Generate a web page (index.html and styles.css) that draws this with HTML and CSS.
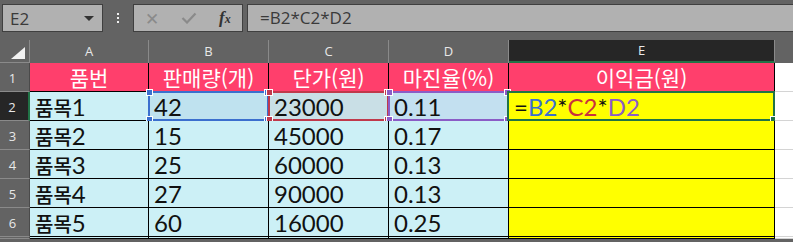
FILE: index.html
```html
<!DOCTYPE html>
<html lang="ko">
<head>
<meta charset="UTF-8" />
  <meta name="viewport" content="width=device-width, initial-scale=1.0"/>
  <title>E2 | 이익금</title>
  <link rel="stylesheet" href="styles.css">
</head>
<body>
  <div class="formula-bar">
    <div class="name-box">
      <span>E2</span>
      <span class="caret"></span>
    </div>
    <div class="grip"><i></i><i></i><i></i></div>
    <div class="fx-buttons">
      <span class="btn-x">&#x2715;</span>
      <svg class="btn-ok" width="16" height="12" viewBox="0 0 16 12"><path d="M1.5 6 L6 10.5 L14.5 1.5" fill="none" stroke="#8a8a8a" stroke-width="2.2"/></svg>
      <span class="btn-fx">f<small>x</small></span>
    </div>
    <div class="formula-input">=B2*C2*D2</div>
  </div>

  <div class="sheet">
    <!-- column headers -->
    <div class="corner"><span class="tri"></span></div>
    <div class="col-head">A</div>
    <div class="col-head">B</div>
    <div class="col-head">C</div>
    <div class="col-head">D</div>
    <div class="col-head active">E</div>
    <div class="col-head blank"></div>

    <!-- row 1 -->
    <div class="row-head">1</div>
    <div class="cell head ko">품번</div>
    <div class="cell head ko">판매량(개)</div>
    <div class="cell head ko">단가(원)</div>
    <div class="cell head ko">마진율(%)</div>
    <div class="cell head ko">이익금(원)</div>
    <div class="cell empty"></div>

    <!-- row 2 -->
    <div class="row-head active">2</div>
    <div class="cell data"><span class="ko">품목</span>1</div>
    <div class="cell data ref-b">42<span class="sel blue"><i class="h tl"></i><i class="h tr"></i><i class="h bl"></i><i class="h br"></i></span></div>
    <div class="cell data ref-c">23000<span class="sel red"><i class="h tl"></i><i class="h tr"></i><i class="h bl"></i><i class="h br"></i></span></div>
    <div class="cell data ref-d">0.11<span class="sel purple"><i class="h tl"></i><i class="h tr"></i><i class="h bl"></i><i class="h br"></i></span></div>
    <div class="cell result">=<span class="c-blue">B2</span>*<span class="c-red">C2</span>*<span class="c-purple">D2</span><span class="sel green"><i class="h br"></i></span></div>
    <div class="cell empty"></div>

    <!-- rows 3-6 -->
    <div class="row-head">3</div>
    <div class="cell data"><span class="ko">품목</span>2</div>
    <div class="cell data">15</div>
    <div class="cell data">45000</div>
    <div class="cell data">0.17</div>
    <div class="cell result"></div>
    <div class="cell empty"></div>

    <div class="row-head">4</div>
    <div class="cell data"><span class="ko">품목</span>3</div>
    <div class="cell data">25</div>
    <div class="cell data">60000</div>
    <div class="cell data">0.13</div>
    <div class="cell result"></div>
    <div class="cell empty"></div>

    <div class="row-head">5</div>
    <div class="cell data"><span class="ko">품목</span>4</div>
    <div class="cell data">27</div>
    <div class="cell data">90000</div>
    <div class="cell data">0.13</div>
    <div class="cell result"></div>
    <div class="cell empty"></div>

    <div class="row-head">6</div>
    <div class="cell data"><span class="ko">품목</span>5</div>
    <div class="cell data">60</div>
    <div class="cell data">16000</div>
    <div class="cell data">0.25</div>
    <div class="cell result"></div>
    <div class="cell empty"></div>

    <!-- row 7, only its top shows -->
    <div class="row-head"></div>
    <div class="cell data"></div>
    <div class="cell data"></div>
    <div class="cell data"></div>
    <div class="cell data"></div>
    <div class="cell result"></div>
    <div class="cell empty"></div>
  </div>
</body>
</html>
```

FILE: styles.css
```css
* {
  box-sizing: border-box;
}
body {
  margin: 0;
  background: #636363;
  font-family: 'Segoe UI', 'Open Sans', 'Noto Sans CJK KR', sans-serif;
  overflow: hidden;
}

/* formula bar */
.formula-bar {
  display: flex;
  align-items: center;
  height: 36px;
  padding: 0 0 0 2px;
}
.name-box {
  display: flex;
  align-items: center;
  justify-content: space-between;
  width: 101px;
  height: 28px;
  padding: 0 8px 0 7px;
  background: #b1b1b1;
  border: 1px solid #3f3f3f;
  color: #3a3a3a;
  font-family: 'Open Sans', sans-serif;
  font-size: 17px;
}
.caret {
  width: 0;
  height: 0;
  border-left: 5px solid transparent;
  border-right: 5px solid transparent;
  border-top: 5px solid #333;
}
.grip {
  display: flex;
  flex-direction: column;
  gap: 2px;
  width: 30px;
  align-items: center;
}
.grip i {
  width: 2px;
  height: 2px;
  background: #f0f0f0;
}
.fx-buttons {
  display: flex;
  align-items: center;
  width: 110px;
  height: 28px;
  padding: 0 0 0 11px;
  background: #b1b1b1;
  border: 1px solid #3f3f3f;
}
.btn-x {
  width: 36px;
  color: #8a8a8a;
  font-size: 17px;
}
.btn-ok {
  margin-right: 22px;
}
.btn-fx {
  font-family: 'Liberation Serif', serif;
  font-style: italic;
  font-weight: bold;
  font-size: 17px;
  color: #333;
}
.btn-fx small {
  font-size: 12px;
}
.formula-input {
  flex: 1;
  height: 28px;
  margin-left: 4px;
  padding: 0 0 0 12px;
  background: #b1b1b1;
  border: 1px solid #3f3f3f;
  border-right: none;
  color: #3a3a3a;
  font-family: 'Open Sans', sans-serif;
  font-size: 17px;
  line-height: 26px;
}

/* sheet grid */
.sheet {
  display: grid;
  grid-template-columns: 30px 119px 120px 120px 120px 266px 30px;
  grid-template-rows: 23px repeat(6, 29px);
  margin-top: 4px;
}
.corner {
  position: relative;
  border-right: 1px solid #8a8a8a;
  border-bottom: 1px solid #8a8a8a;
}
.tri {
  position: absolute;
  right: 4px;
  bottom: 3px;
  width: 0;
  height: 0;
  border-left: 14px solid transparent;
  border-bottom: 12px solid #f2f2f2;
}
.col-head {
  text-align: center;
  color: #e8e8e8;
  font-family: 'Open Sans', sans-serif;
  font-size: 13px;
  line-height: 22px;
  border-right: 1px solid #8a8a8a;
}
.col-head.active {
  background: #262626;
  border-bottom: 2px solid #217346;
  line-height: 20px;
}
.col-head.blank {
  border-right: none;
}
.row-head {
  text-align: center;
  color: #e8e8e8;
  font-family: 'Open Sans', sans-serif;
  font-size: 13px;
  line-height: 30px;
  padding-right: 4px;
  border-bottom: 1px solid #8a8a8a;
  border-right: 1px solid #4a4a4a;
}
.row-head.active {
  background: #262626;
  border-right: 2px solid #217346;
}

.cell {
  position: relative;
  border-right: 1px solid #000;
  border-bottom: 1px solid #000;
  padding: 1px 0 0 5px;
  font-family: 'Lato', 'Noto Sans CJK KR', sans-serif;
  font-size: 24px;
  line-height: 28px;
  color: #111;
  white-space: nowrap;
}
.ko {
  font-family: 'Noto Sans CJK KR', sans-serif;
  font-size: 20px;
  font-weight: 500;
}
.cell.head {
  background: #ff3f6c;
  color: #fff;
  text-align: center;
  padding: 0;
  font-size: 21px;
  font-weight: 400;
  line-height: 29px;
}
.cell.data {
  background: #ccf0f6;
}
.cell.ref-b {
  background: #bfe2ef;
}
.cell.ref-c {
  background: #c9dfe6;
}
.cell.ref-d {
  background: #c3e0f0;
}
.cell.result {
  background: #ffff00;
}
.cell.empty {
  background: #fff;
  border-right: none;
  border-bottom: 1px solid #d4d4d4;
}

.c-blue { color: #3b6fce; }
.c-red { color: #c8313f; }
.c-purple { color: #8b5cc6; }

/* reference outlines, drawn over the cells */
.sel {
  position: absolute;
  top: -1px;
  left: -1px;
  right: -1px;
  bottom: -1px;
  border: 2px solid;
}
.sel.blue { border-color: #3b6fce; }
.sel.red { border-color: #c0394b; }
.sel.purple { border-color: #8b5cc6; }
.sel.green {
  border-color: #217346;
  top: -1px;
  left: -2px;
  right: -1px;
}
.h {
  position: absolute;
  width: 7px;
  height: 7px;
  border: 1px solid #fff;
  background: inherit;
}
.blue .h { background: #3b6fce; }
.red .h { background: #c0394b; }
.purple .h { background: #8b5cc6; }
.green .h { background: #217346; }
.h.tl { top: -4px; left: -4px; }
.h.tr { top: -4px; right: -4px; }
.h.bl { bottom: -4px; left: -4px; }
.h.br { bottom: -4px; right: -4px; }
```
